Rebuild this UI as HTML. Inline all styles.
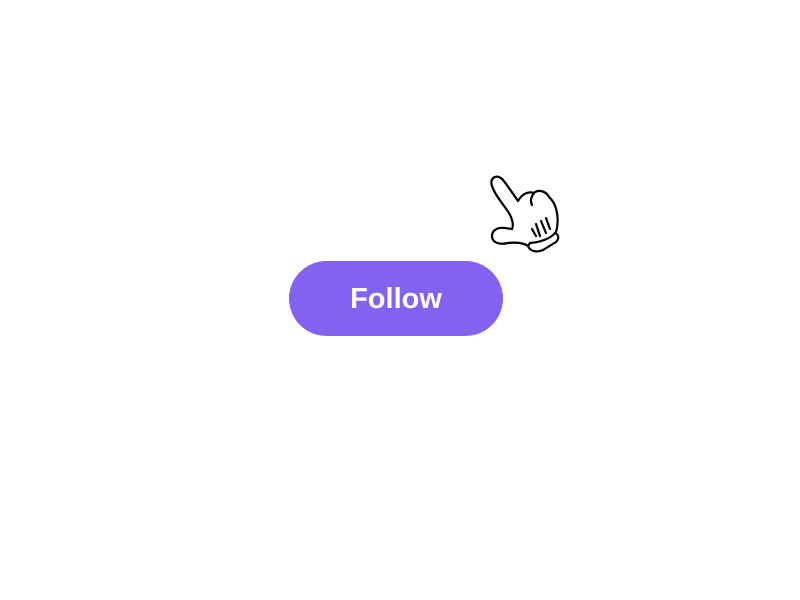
<!DOCTYPE html>
<html><head><style>
html,body{margin:0;padding:0;background:#fff;width:800px;height:600px;overflow:hidden}
.btn{position:absolute;left:289px;top:261px;width:214px;height:75px;border-radius:38px;background:#8262ee;color:#fff;font-family:"Liberation Sans",sans-serif;font-weight:bold;font-size:29px;line-height:76px;text-align:center}
svg{position:absolute;left:0;top:0}
</style></head><body>
<div class="btn">Follow</div>
<svg width="800" height="600" fill="none" stroke="#000" stroke-width="2.2" stroke-linecap="round" stroke-linejoin="round">
<path fill="#fff" d="M492,186 C489,178 497,173 503,180 C508,186 513,194 518,201 C522,194 528,191 534,193 C538,189 546,191 549,197 C556,203 559,215 557,228 C556,234 552,238 547,242 L528,246 C524,243 516,242 508,243 C500,245 492,243 492,236 C492,230 498,227 505,228 L512,229 C514,225 512,218 509,213 C503,204 495,195 492,186 Z"/>
<path fill="#fff" d="M528,246 C530,251 536,253 543,250 L556,242 C560,238 558,234 555,233 C551,238 542,242 530,243 Z"/>
<path d="M534,193 C531,197 530,201 532,205"/>
<path d="M536,224 L540,236"/>
<path d="M541,221 L546,233"/>
<path d="M546,218 L550,229"/>
<path d="M532,229 L536,236"/>
</svg>
</body></html>
